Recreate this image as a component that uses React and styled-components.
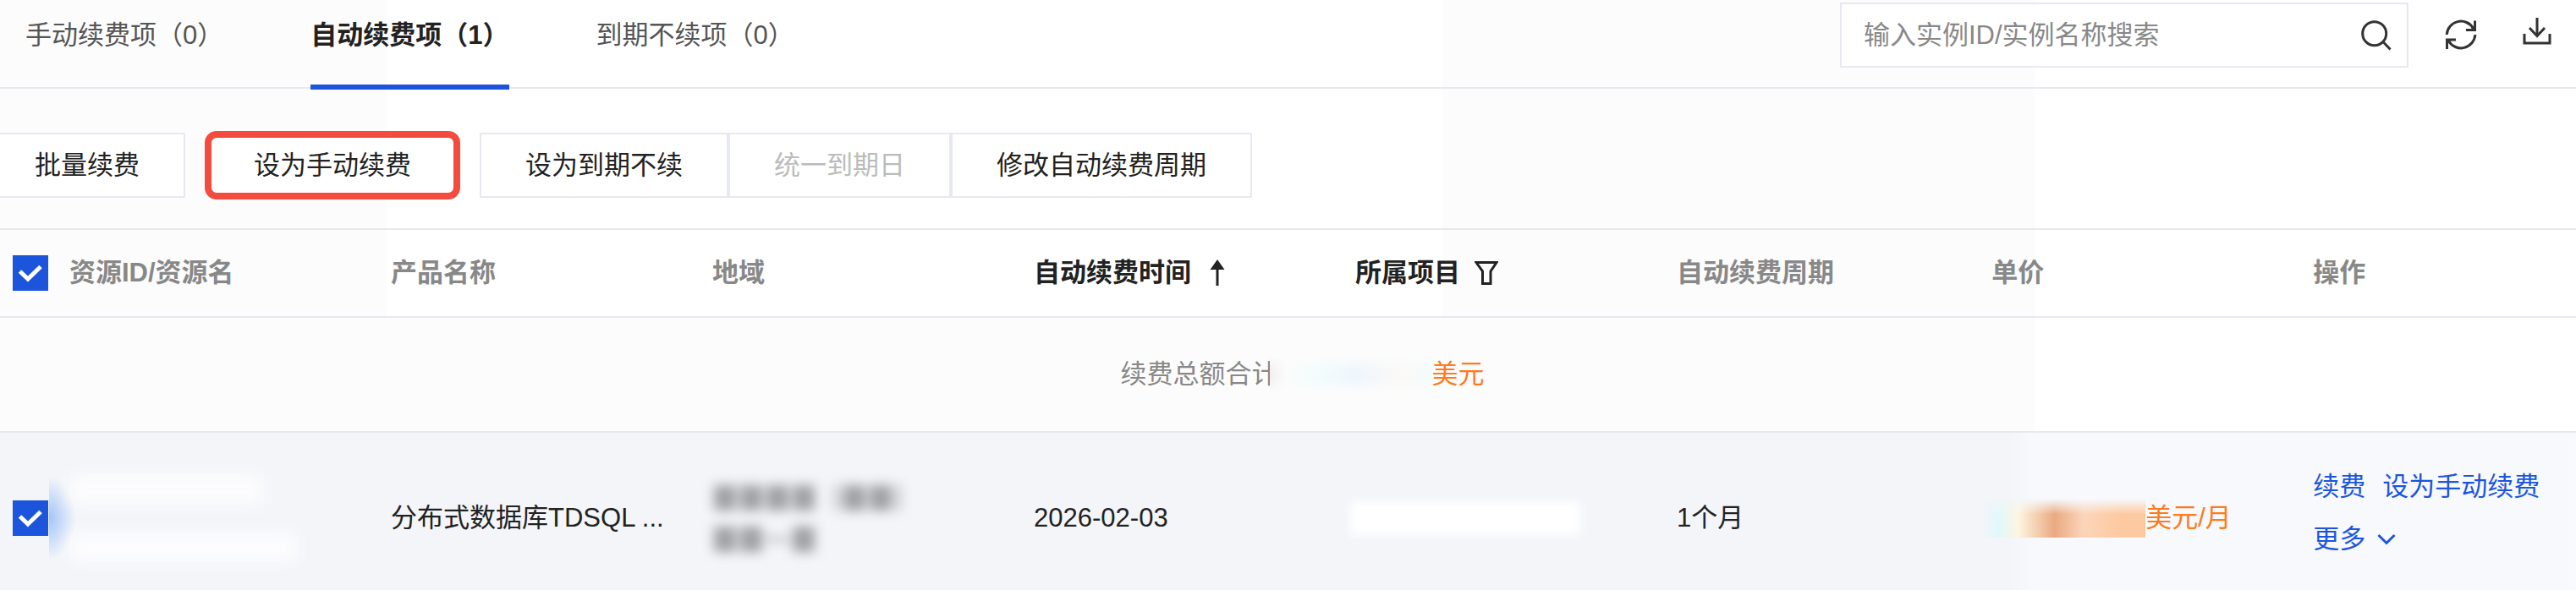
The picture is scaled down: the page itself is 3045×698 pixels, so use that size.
import React, { useState } from "react";
import styled, { createGlobalStyle } from "styled-components";

const GlobalStyle = createGlobalStyle`
  * {
    box-sizing: border-box;
  }
  body {
    margin: 0;
    background: #fff;
    color: #222;
    font-family: "Liberation Sans", "Noto Sans CJK SC", sans-serif;
    font-size: 31px;
    line-height: 44px;
  }
  button,
  input {
    font: inherit;
    color: inherit;
    margin: 0;
  }
  button {
    cursor: pointer;
  }
`;

const tabs = [
  { id: "manual", label: "手动续费项（0）" },
  { id: "auto", label: "自动续费项（1）" },
  { id: "expire", label: "到期不续项（0）" },
];

function SearchIcon() {
  return (
    <svg width="36" height="36" viewBox="0 0 36 36" fill="none" stroke="#333" strokeWidth="3">
      <circle cx="15.7" cy="15.7" r="14" />
      <path d="M26 25.5L34.5 34.5" />
    </svg>
  );
}

function RefreshIcon() {
  return (
    <svg width="38" height="38" viewBox="0 0 38 38" fill="none" stroke="#333" strokeWidth="3">
      <path d="M2.2 18A16.8 16.8 0 0 1 33.5 10.5" />
      <path d="M35.8 18A16.8 16.8 0 0 1 4.5 25.5" />
      <path d="M35.5 1.5V12.5H25" />
      <path d="M2.5 35V24H13" />
      <path d="M36 6V13H29Z M2 30V23H9Z" fill="#333" stroke="none" />
    </svg>
  );
}

function DownloadIcon() {
  return (
    <svg width="34" height="44" viewBox="0 0 34 44" fill="none" stroke="#333" strokeWidth="3">
      <path d="M17 1V23" />
      <path d="M8 13L17 22.5L26 13" />
      <path d="M2 20V31H32V20" />
    </svg>
  );
}

function SortIcon() {
  return (
    <svg width="18" height="32" viewBox="0 0 18 32">
      <path d="M9 0L17.5 12H10.5V31H7.5V12H0.5Z" fill="#222" />
    </svg>
  );
}

function FilterIcon() {
  return (
    <svg width="28" height="30" viewBox="0 0 28 30" fill="none" stroke="#222" strokeWidth="3">
      <path d="M2 2.5H26L19 13V27.5H9.5V13Z" />
    </svg>
  );
}

function ChevronIcon() {
  return (
    <svg width="22" height="16" viewBox="0 0 22 16" fill="none" stroke="#1c55dc" strokeWidth="3">
      <path d="M1.5 3L11 12.5L20.5 3" />
    </svg>
  );
}

function App() {
  const [active, setActive] = useState("auto");
  const [allChecked, setAllChecked] = useState(true);
  const [checked, setChecked] = useState(true);

  return (
    <Page>
      <GlobalStyle />
      <Header>
        <Tabs role="tablist">
          {tabs.map((tab) => (
            <Tab
              key={tab.id}
              type="button"
              role="tab"
              aria-selected={active === tab.id}
              $active={active === tab.id}
              onClick={() => setActive(tab.id)}
            >
              {tab.label}
            </Tab>
          ))}
        </Tabs>
        <Tools>
          <SearchBox>
            <input type="text" aria-label="搜索" placeholder="输入实例ID/实例名称搜索" />
            <SearchIcon />
          </SearchBox>
          <IconButton type="button" aria-label="刷新">
            <RefreshIcon />
          </IconButton>
          <IconButton type="button" aria-label="下载">
            <DownloadIcon />
          </IconButton>
        </Tools>
      </Header>

      <Toolbar>
        <ActionButton type="button">批量续费</ActionButton>
        <ActionButton type="button" $marked>
          设为手动续费
        </ActionButton>
        <ButtonGroup>
          <ActionButton type="button">设为到期不续</ActionButton>
          <ActionButton type="button" disabled>
            统一到期日
          </ActionButton>
          <ActionButton type="button">修改自动续费周期</ActionButton>
        </ButtonGroup>
      </Toolbar>

      <Table>
        <colgroup>
          <Col $width="82px" />
          <Col $width="12.48%" />
          <Col $width="12.48%" />
          <Col $width="12.48%" />
          <Col $width="12.48%" />
          <Col $width="12.48%" />
          <Col $width="12.22%" />
          <Col $width="12.48%" />
          <Col />
        </colgroup>
        <thead>
          <tr>
            <HeadCell>
              <Checkbox
                type="checkbox"
                aria-label="全选"
                checked={allChecked}
                onChange={(e) => setAllChecked(e.target.checked)}
              />
            </HeadCell>
            <HeadCell>资源ID/资源名</HeadCell>
            <HeadCell>产品名称</HeadCell>
            <HeadCell>地域</HeadCell>
            <HeadCell $dark>
              <HeadLabel $gap="22px">
                自动续费时间
                <SortIcon />
              </HeadLabel>
            </HeadCell>
            <HeadCell $dark>
              <HeadLabel $gap="17px">
                所属项目
                <FilterIcon />
              </HeadLabel>
            </HeadCell>
            <HeadCell>自动续费周期</HeadCell>
            <HeadCell>单价</HeadCell>
            <HeadCell>操作</HeadCell>
          </tr>
        </thead>
        <tbody>
          <tr>
            <SummaryCell colSpan={9}>
              <Summary>
                续费总额合计
                <TotalMask />
                <Price>美元</Price>
              </Summary>
            </SummaryCell>
          </tr>
          <DataRow>
            <Cell>
              <Checkbox
                type="checkbox"
                aria-label="选择资源"
                checked={checked}
                onChange={(e) => setChecked(e.target.checked)}
              />
            </Cell>
            <Cell>
              <ResourceMask>
                <span />
                <span />
              </ResourceMask>
            </Cell>
            <Cell>分布式数据库TDSQL ...</Cell>
            <Cell>
              {/* hidden region and zone */}
              <RegionMask>
                <Block />
                <Block />
                <Block />
                <Block />
                <Bracket />
                <Block />
                <Block />
                <Bracket />
              </RegionMask>
              <RegionMask>
                <Block />
                <Block />
                <Dash />
                <Block />
              </RegionMask>
            </Cell>
            <Cell>2026-02-03</Cell>
            <Cell>
              <ProjectMask />
            </Cell>
            <Cell>1个月</Cell>
            <Cell>
              <PriceLine>
                <PriceMask />
                <Price>美元/月</Price>
              </PriceLine>
            </Cell>
            <Cell>
              <Actions>
                <a href="#renew">续费</a>
                <a href="#manual">设为手动续费</a>
                <a href="#more">
                  更多
                  <ChevronIcon />
                </a>
              </Actions>
            </Cell>
          </DataRow>
        </tbody>
      </Table>
    </Page>
  );
}

const Page = styled.div`
  overflow: hidden;
  background: linear-gradient(
    to right,
    #fcfcfc 15%,
    #fff 15%,
    #fff 56%,
    #fcfcfc 56%,
    #fcfcfc 79%,
    #fff 79%
  );
`;

const Header = styled.div`
  display: flex;
  justify-content: space-between;
  height: 105px;
  border-bottom: 2px solid #e6e9f0;
`;

const Tabs = styled.div`
  display: flex;
  align-items: flex-start;
  gap: 103px;
  padding-left: 30px;
`;

const Tab = styled.button`
  height: 106px;
  padding: 20px 0 36px;
  border: none;
  border-bottom: 6px solid ${(p) => (p.$active ? "#1c55dc" : "transparent")};
  background: none;
  color: ${(p) => (p.$active ? "#222" : "#555")};
  font-weight: ${(p) => (p.$active ? 700 : 400)};
  white-space: nowrap;
`;

const Tools = styled.div`
  flex: 0 1 870px;
  display: flex;
  align-items: center;
  align-self: flex-start;
  gap: 34px;
  padding: 3px 18px 0 0;
`;

const SearchBox = styled.div`
  flex: 1;
  display: flex;
  align-items: center;
  height: 77px;
  padding: 0 18px 0 26px;
  border: 2px solid #e6e9f2;
  background: #fff;

  input {
    flex: 1;
    min-width: 0;
    padding: 0;
    border: none;
    outline: none;
    background: none;
  }
  input::placeholder {
    color: #888;
    opacity: 1;
  }
`;

const IconButton = styled.button`
  display: flex;
  justify-content: center;
  align-items: center;
  width: 56px;
  height: 56px;
  padding: 0;
  border: none;
  background: none;
`;

const Toolbar = styled.div`
  display: flex;
  gap: 25px;
  padding: 52px 0 36px;
  margin-left: -13px;
`;

const ButtonGroup = styled.div`
  display: flex;
`;

const ActionButton = styled.button`
  height: 77px;
  padding: 0 ${(p) => (p.$marked ? "54px" : "52px")};
  border: 2px solid #e6e9f2;
  background: #fff;
  white-space: nowrap;
  ${(p) =>
    p.$marked &&
    `
    border-radius: 12px;
    outline: 8px solid #f34c3e;
    outline-offset: -6px;
  `}

  &:disabled {
    color: #bbb;
    cursor: default;
  }
`;

const Table = styled.table`
  width: 100%;
  table-layout: fixed;
  border-collapse: separate;
  border-spacing: 0;
`;

const Col = styled.col`
  width: ${(p) => p.$width || "auto"};
`;

const HeadCell = styled.th`
  height: 106px;
  padding: 0;
  border-top: 2px solid #e6e9ee;
  border-bottom: 2px solid #e6e9ee;
  color: ${(p) => (p.$dark ? "#222" : "#888")};
  text-align: left;
  white-space: nowrap;
`;

const HeadLabel = styled.span`
  display: flex;
  align-items: center;
  gap: ${(p) => p.$gap};
`;

const Checkbox = styled.input`
  appearance: none;
  display: block;
  width: 42px;
  height: 42px;
  margin-left: 15px;
  border: 2px solid #1c55dc;
  background: #fff;

  &:checked {
    background: #1c55dc
      url("data:image/svg+xml,%3Csvg xmlns='http://www.w3.org/2000/svg' viewBox='0 0 38 38' fill='none' stroke='white' stroke-width='5'%3E%3Cpath d='M6.5 17L16 26L31 11.5'/%3E%3C/svg%3E")
      center / 38px 38px no-repeat;
  }
`;

const SummaryCell = styled.td`
  height: 136px;
  padding: 0 0 0 34px;
  border-bottom: 2px solid #e6e9ee;
  background: linear-gradient(to right, #fcfcfc 79%, #fff 79%);
`;

const Summary = styled.div`
  display: flex;
  justify-content: center;
  align-items: center;
  color: #888;
`;

const Price = styled.span`
  color: #ff7a1c;
  white-space: nowrap;
`;

const TotalMask = styled.span`
  width: 192px;
  height: 44px;
  margin-left: -10px;
  background:
    linear-gradient(#fcfcfc, transparent 40%, transparent 60%, #fcfcfc),
    linear-gradient(
      to right,
      #f0f0f0,
      #fbfcfb 10%,
      #f1fcfd 32%,
      #eff6fc 55%,
      #fbf9f7 80%,
      #f3fbfb
    );
  z-index: 1;
`;

const DataRow = styled.tr`
  background: linear-gradient(to right, #f3f5f9 78%, #f7f9fd 79%);
`;

const Cell = styled.td`
  height: 186px;
  padding: 16px 0 0;
  white-space: nowrap;
`;

const ResourceMask = styled.div`
  position: relative;
  display: flex;
  flex-direction: column;
  gap: 32px;
  width: 270px;

  span {
    height: 36px;
    background: #fcfcfd;
    filter: blur(9px);
  }
  span:first-child {
    width: 230px;
  }
  &::before {
    content: "";
    position: absolute;
    left: -24px;
    top: 2px;
    width: 32px;
    height: 100px;
    background: radial-gradient(ellipse at left, #a3c5f8, transparent 70%);
  }
`;

const RegionMask = styled.div`
  display: flex;
  align-items: center;
  gap: 5px;
  height: 49px;
  padding-left: 2px;
  filter: blur(7px);
`;

const Block = styled.span`
  width: 26px;
  height: 30px;
  background: #a0a1a4;
`;

const Bracket = styled.span`
  width: 6px;
  height: 30px;
  margin-left: 18px;
  background: #c0c1c4;

  &:last-child {
    margin-left: 0;
  }
`;

const Dash = styled.span`
  width: 26px;
  height: 4px;
  background: #a0a1a4;
`;

const ProjectMask = styled.div`
  width: 272px;
  height: 40px;
  margin-left: -6px;
  background: #fff;
  filter: blur(6px);
`;

const PriceLine = styled.div`
  display: flex;
  align-items: center;
`;

const PriceMask = styled.span`
  width: 192px;
  height: 46px;
  margin-left: -10px;
  background: linear-gradient(
    to right,
    transparent,
    #e0f8fc 9%,
    #fdf5df 22%,
    #e9aa82 44%,
    #fcd5ba 62%,
    #fdc9a0 85%
  );
  mask-image: linear-gradient(transparent, #000 40%);
`;

const Actions = styled.div`
  display: flex;
  flex-wrap: wrap;
  column-gap: 20px;
  padding-bottom: 12px;
  line-height: 62px;

  a {
    display: flex;
    align-items: center;
    gap: 14px;
    color: #1c55dc;
    text-decoration: none;
  }
`;

export default App;
